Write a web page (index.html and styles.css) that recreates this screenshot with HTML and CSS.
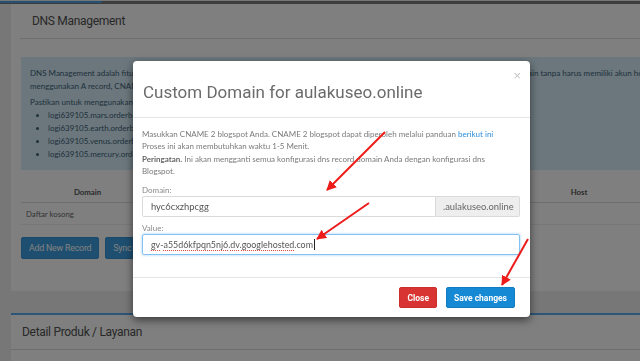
FILE: index.html
```html
<!DOCTYPE html>
<html lang="id">
<head>
    <meta charset="UTF-8">
    <meta name="viewport" content="width=device-width, initial-scale=1.0">
    <title>DNS Management</title>
    <link rel="stylesheet" href="styles.css">
</head>
<body>
    <div class="topbar"><span class="topbar-progress"></span></div>

    <div class="page">
        <div class="panel">
            <div class="panel-head">DNS Management</div>
            <div class="panel-body">
                <div class="alert-info">
                    <p>DNS Management adalah fitur yang memungkinkan Anda untuk mengelola semua record DNS (A, CNAME, MX, TXT) secara langsung dari domain tanpa harus memiliki akun hosting. Anda dapat<br>
                    menggunakan A record, CNAME record, MX record dan TXT record sesuai kebutuhan.</p>
                    <p class="gap">Pastikan untuk menggunakan nameserver berikut:</p>
                    <ul>
                        <li>logi639105.mars.orderbox-dns.com</li>
                        <li>logi639105.earth.orderbox-dns.com</li>
                        <li>logi639105.venus.orderbox-dns.com</li>
                        <li>logi639105.mercury.orderbox-dns.com</li>
                    </ul>
                </div>

                <table class="records">
                    <thead>
                        <tr>
                            <th class="col-domain">Domain</th>
                            <th class="col-type">Type</th>
                            <th class="col-value">Value</th>
                            <th class="col-host">Host</th>
                            <th class="col-action">Aksi</th>
                        </tr>
                    </thead>
                    <tbody>
                        <tr><td colspan="5">Daftar kosong</td></tr>
                    </tbody>
                </table>

                <div class="actions">
                    <button class="btn btn-dark">Add New Record</button>
                    <button class="btn btn-dark">Sync Record</button>
                </div>
            </div>
        </div>

        <div class="panel panel-accent">
            <div class="panel-head panel-head-full">Detail Produk / Layanan</div>
            <div class="panel-body">
                <div class="detail-line"></div>
            </div>
        </div>
    </div>

    <div class="backdrop"></div>

    <div class="modal">
        <div class="modal-header">
            <h4 class="modal-title">Custom Domain for aulakuseo.online</h4>
            <button class="close">&times;</button>
        </div>
        <div class="modal-body">
            <p>Masukkan CNAME 2 blogspot Anda. CNAME 2 blogspot dapat diperoleh melalui panduan <a href="#">berikut ini</a><br>
            Proses ini akan membutuhkan waktu 1-5 Menit.</p>
            <p><b>Peringatan.</b> Ini akan mengganti semua konfigurasi dns record domain Anda dengan konfigurasi dns<br>
            Blogspot.</p>

            <div class="form-group">
                <label>Domain:</label>
                <div class="input-group">
                    <input class="form-control" type="text" value="hyc6cxzhpcgg">
                    <span class="input-addon">.aulakuseo.online</span>
                </div>
            </div>
            <div class="form-group">
                <label>Value:</label>
                <div class="form-control value focused"><span class="typo">gv</span>-<span class="typo">a55d6kfpqn5nj6</span>.<span class="typo">dv</span>.<span class="typo">googlehosted</span>.com<span class="caret"></span></div>
            </div>
        </div>
        <div class="modal-footer">
            <button class="btn btn-danger">Close</button>
            <button class="btn btn-primary">Save changes</button>
        </div>
    </div>

    <svg class="annotations" width="640" height="361" viewBox="0 0 640 361">
        <defs>
            <marker id="head" viewBox="0 0 10 10" refX="9" refY="5" markerWidth="5" markerHeight="5" orient="auto">
                <path d="M0 0 L10 5 L0 10 Z" fill="#ee1b1b"/>
            </marker>
        </defs>
        <line x1="385" y1="132" x2="327" y2="190" stroke="#ee1b1b" stroke-width="2" marker-end="url(#head)"/>
        <line x1="369" y1="203" x2="317" y2="239" stroke="#ee1b1b" stroke-width="2" marker-end="url(#head)"/>
        <line x1="528" y1="239" x2="502" y2="285" stroke="#ee1b1b" stroke-width="2" marker-end="url(#head)"/>
    </svg>
</body>
</html>
```

FILE: styles.css
```css
html, body {
    margin: 0;
    overflow: hidden;
}
body {
    font-family: Lato, "Open Sans", sans-serif;
    background-color: #eeeeee;
    color: #555;
}
.topbar {
    height: 3px;
    background: #7a7a7a;
}
.topbar-progress {
    display: block;
    width: 102px;
    height: 2px;
    margin-top: 1px;
    background: #4aa0e8;
}
.page {
    width: 709px;
    padding-left: 11px;
}
.panel {
    background: white;
}
.panel-head {
    margin: 0 9px;
    padding-left: 12px;
    height: 34px;
    line-height: 34px;
    border-bottom: 1px solid #dddddd;
    font-family: Roboto, sans-serif;
    font-size: 12px;
    letter-spacing: -0.3px;
    color: #505050;
}
.panel-body {
    padding: 18px 10px 32px;
}
.alert-info {
    background: #d6eefa;
    color: #3f6379;
    padding: 10px 9px 9px;
    font-size: 8px;
    line-height: 13px;
    white-space: nowrap;
}
.alert-info p {
    margin: 0;
}
.alert-info .gap {
    margin-top: 3px;
}
.alert-info ul {
    margin: 0;
    padding-left: 18px;
}
.records {
    width: 100%;
    table-layout: fixed;
    margin-top: 12px;
    border-collapse: collapse;
    font-size: 7.8px;
    color: #6a6a6a;
}
.records th {
    height: 20px;
    padding: 0;
    font-weight: bold;
    color: #555;
    border-bottom: 1px solid #dddddd;
}
.records td {
    height: 19px;
    padding-left: 5px;
    border-bottom: 1px solid #eeeeee;
}
.col-domain { width: 133px; }
.col-type { width: 120px; }
.col-value { width: 250px; }
.col-host { width: 110px; }
.actions {
    display: flex;
    gap: 6px;
    margin-top: 12px;
}
.btn {
    border: 1px solid transparent;
    border-radius: 2px;
    font-family: Roboto, sans-serif;
    color: white;
    cursor: pointer;
}
.btn-dark {
    height: 22px;
    padding: 0 7px;
    background: #3d9fe2;
    border-color: #3592d4;
    font-size: 8.8px;
    letter-spacing: -0.2px;
}
.panel-accent {
    margin-top: 22px;
    border-top: 2px solid #5aaaf0;
}
.panel-head-full {
    margin: 0;
    padding-left: 11px;
}
.panel-accent .panel-body {
    padding: 11px 9px 0;
}
.detail-line {
    border-top: 1px solid #dddddd;
    height: 20px;
}

/* modal */
.backdrop {
    position: fixed;
    inset: 0;
    background: rgba(0, 0, 0, 0.5);
}
.modal {
    position: fixed;
    left: 133px;
    top: 61px;
    width: 397px;
    background: white;
    border-radius: 4px;
    box-shadow: 0 3px 9px rgba(0, 0, 0, 0.55);
}
.modal-header {
    display: flex;
    justify-content: space-between;
    align-items: flex-start;
    padding: 8px 9px 15px 10px;
    border-bottom: 1px solid #e5e5e5;
}
.modal-title {
    margin: 13.5px 0 0;
    font-family: Roboto, sans-serif;
    font-weight: normal;
    font-size: 17px;
    line-height: 19px;
    color: #6b6b6b;
}
.close {
    padding: 0;
    border: 0;
    background: none;
    font-size: 13px;
    line-height: 14px;
    color: #c4c4c4;
}
.modal-body {
    padding: 10px 10px 22px 9px;
    font-size: 8px;
    line-height: 12.6px;
    color: #7a7a7a;
}
.modal-body p {
    margin: 0;
}
.modal-body b {
    color: #666;
}
.modal-body a {
    color: #2d8fdc;
    text-decoration: none;
}
.form-group label {
    display: block;
    margin-top: 6.5px;
    line-height: 12px;
    color: #8a8a8a;
}
.form-group + .form-group label {
    margin-top: 5px;
}
.input-group {
    display: flex;
}
.form-control {
    box-sizing: border-box;
    height: 21px;
    padding: 0 8px;
    border: 1px solid #dadada;
    border-radius: 2px;
    font-family: Lato, sans-serif;
    font-size: 9.4px;
    line-height: 19px;
    color: #555;
    outline: none;
}
.input-group .form-control {
    flex: 1;
    border-radius: 2px 0 0 2px;
}
.form-control.value {
    font-size: 8.9px;
}
.input-addon {
    box-sizing: border-box;
    width: 84px;
    height: 21px;
    padding: 0 7px;
    background: #eeeeee;
    border: 1px solid #dadada;
    border-left: 0;
    border-radius: 0 2px 2px 0;
    font-size: 9.4px;
    line-height: 19px;
    color: #666;
}
.focused {
    border-color: #84c1f0;
    box-shadow: 0 0 3px rgba(102, 175, 233, 0.6);
}
.typo {
    text-decoration: underline dotted #e64545;
    text-decoration-thickness: 1px;
    text-underline-offset: 2px;
}
.caret {
    display: inline-block;
    width: 1px;
    height: 11px;
    margin-left: 1px;
    vertical-align: -2px;
    background: #222;
}
.modal-footer {
    display: flex;
    justify-content: flex-end;
    gap: 9px;
    padding: 9px 15px;
    border-top: 1px solid #e5e5e5;
}
.modal-footer .btn {
    height: 21px;
    padding: 0 7px;
    font-size: 8.5px;
    font-weight: bold;
}
.btn-danger {
    background: #d83431;
    border-color: #c9302c;
}
.btn-primary {
    background: #1689d4;
    border-color: #127cc1;
}
.annotations {
    position: fixed;
    left: 0;
    top: 0;
}
```
